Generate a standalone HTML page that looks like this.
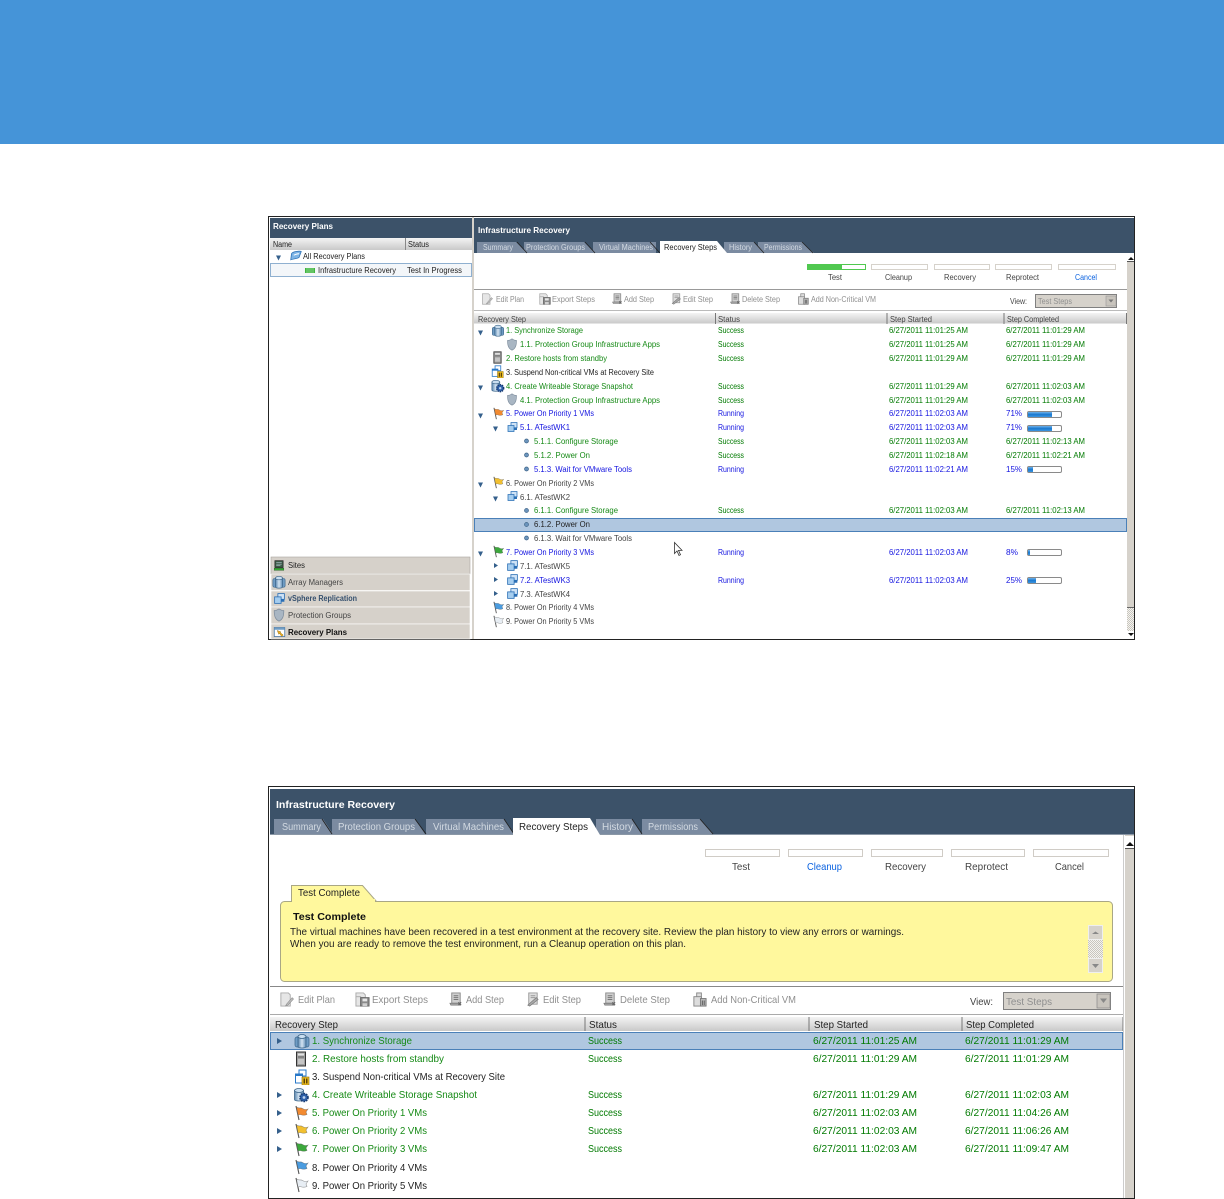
<!DOCTYPE html>
<html><head><meta charset="utf-8"><title>Recovery Plans</title>
<style>
html,body{margin:0;padding:0;background:#fff}
svg{display:block}
text{font-family:"Liberation Sans",sans-serif;white-space:pre}
.t{filter:blur(.3px)}
.u{filter:blur(.25px)}
.t text{font-size:8px}
.u text{font-size:10.5px}
.g{fill:#168a16}.d{fill:#007a00}.b{fill:#1414e0}.k{fill:#222}.m{fill:#444}.n{fill:#666}.y{fill:#8f8f8f}.w{fill:#fff;font-weight:bold}.l{fill:#d3dae2}.c{fill:#0a62e0}.h{fill:#111;font-weight:bold}
</style></head><body>
<svg xmlns="http://www.w3.org/2000/svg" width="1224" height="1199" viewBox="0 0 1224 1199">
<defs>
<linearGradient id="hd" x1="0" y1="0" x2="0" y2="1"><stop offset="0" stop-color="#f4f4f4"/><stop offset="1" stop-color="#c9c9c9"/></linearGradient>
<linearGradient id="pb" x1="0" y1="0" x2="0" y2="1"><stop offset="0" stop-color="#6fb2ea"/><stop offset=".5" stop-color="#1878cf"/><stop offset="1" stop-color="#3d95df"/></linearGradient>
<linearGradient id="cy" x1="0" y1="0" x2="1" y2="0"><stop offset="0" stop-color="#5b88b0"/><stop offset=".5" stop-color="#d4e4f2"/><stop offset="1" stop-color="#5f8cb4"/></linearGradient>
<pattern id="dit" width="2" height="2" patternUnits="userSpaceOnUse"><rect width="2" height="2" fill="#f4f3ef"/><rect width="1" height="1" fill="#c8c5be"/><rect x="1" y="1" width="1" height="1" fill="#c8c5be"/></pattern>
<symbol id="cyl" viewBox="0 0 16 16"><rect x="1" y="4" width="5" height="10" rx="2" fill="#6f9cc4" stroke="#3b6488" stroke-width=".7"/><rect x="10" y="4" width="5" height="10" rx="2" fill="#6f9cc4" stroke="#3b6488" stroke-width=".7"/><path d="M4 3.500v10c0 2 8 2 8 0v-10z" fill="url(#cy)" stroke="#3b6488" stroke-width=".8"/><ellipse cx="8" cy="3.500" rx="4" ry="2" fill="#c9def0" stroke="#3b6488" stroke-width=".8"/></symbol>
<symbol id="cog" viewBox="0 0 16 16"><path d="M1 3.500v9c0 2 9 2 9 0v-9z" fill="url(#cy)" stroke="#3b6488" stroke-width=".8"/><ellipse cx="5.500" cy="3.500" rx="4.500" ry="2" fill="#c9def0" stroke="#3b6488" stroke-width=".8"/><circle cx="10.500" cy="10.500" r="4" fill="#2d5fa8" stroke="#173a70" stroke-width="1.600" stroke-dasharray="1.600 1"/><circle cx="10.500" cy="10.500" r="1.400" fill="#bcd4ef"/></symbol>
<symbol id="srv" viewBox="0 0 16 16"><rect x="3.500" y="1" width="9" height="14" fill="#a0a0a0" stroke="#333" stroke-width="1"/><rect x="5" y="2.500" width="6" height="2" fill="#e2e2e2"/><rect x="5" y="5.500" width="6" height="1" fill="#666"/><rect x="5" y="8" width="6" height="5" fill="#c5c5c5"/></symbol>
<symbol id="sus" viewBox="0 0 16 16"><rect x="5" y="1" width="7" height="6" fill="#fff" stroke="#2878c8"/><rect x="1.500" y="5" width="7" height="9" fill="#fff" stroke="#2878c8"/><rect x="1.500" y="5" width="7" height="2" fill="#2878c8"/><rect x="8" y="8" width="7" height="8" fill="#f0c020" stroke="#8a6a10" stroke-width=".6"/><rect x="9.500" y="9.500" width="1.500" height="5" fill="#5a4208"/><rect x="12" y="9.500" width="1.500" height="5" fill="#5a4208"/></symbol>
<symbol id="vm" viewBox="0 0 16 16"><rect x="6" y="2" width="8" height="7" fill="#cfe3f6" stroke="#2a6fb5"/><rect x="2" y="6" width="8" height="8" fill="#a5cdef" stroke="#2a6fb5"/><rect x="10" y="9" width="4" height="3" fill="#2a6fb5"/></symbol>
<symbol id="shd" viewBox="0 0 16 16"><path d="M2.500 3c3 0 4-1 5.500-2 1.500 1 2.500 2 5.500 2 0 6-1 10-5.500 12C3.500 13 2.500 9 2.500 3z" fill="#a9b6c3" stroke="#7c8b9b" stroke-width=".8"/></symbol>
<symbol id="flg" viewBox="0 0 16 16"><path d="M3 1l3 14" stroke="#555" stroke-width="1.100"/><path d="M3.500 2c3 2 4 0 6 1.500 1.500 1 3 1.500 5.500.5l-2 3 1 2.500c-3 1.500-5 .5-7 0l-2 .5z" fill="currentColor" stroke="#555" stroke-opacity=".6" stroke-width=".6"/></symbol>
<symbol id="pg" viewBox="0 0 16 16"><path d="M2 1h8l2 2v12H2z" fill="#e6e6e6" stroke="#aaa"/><path d="M8 13l6-7 1.500 1.500-6 6.500-2.500.8z" fill="#bdbdbd" stroke="#888" stroke-width=".6"/></symbol>
<symbol id="ex" viewBox="0 0 16 16"><path d="M1 1h8l2 2v3H1z" fill="#e6e6e6" stroke="#aaa"/><rect x="1" y="5" width="5" height="10" fill="#e6e6e6" stroke="#aaa"/><rect x="6" y="6" width="9" height="9" fill="#8a8a8a" stroke="#666"/><rect x="8" y="7" width="5" height="3" fill="#e6e6e6"/><rect x="8" y="12" width="5" height="3" fill="#d0d0d0"/></symbol>
<symbol id="sc" viewBox="0 0 16 16"><path d="M4 1h9v11H4z" fill="#cfcfcf" stroke="#888"/><path d="M2 12h9l2 2H3z" fill="#aaa" stroke="#777" stroke-width=".7"/><path d="M6 4h5M6 6h5M6 8h5" stroke="#777"/><path d="M11 11l3 3M14 11l-3 3" stroke="#666" stroke-width="1.200"/></symbol>
<symbol id="es" viewBox="0 0 16 16"><path d="M4 1h9v12H4z" fill="#dedede" stroke="#999"/><path d="M6 4h5M6 6h5" stroke="#999"/><path d="M3 14l9-8 2 2-9 7z" fill="#aaa" stroke="#777" stroke-width=".7"/></symbol>
<symbol id="av" viewBox="0 0 16 16"><rect x="5" y="1" width="5" height="5" fill="#ddd" stroke="#888"/><rect x="2" y="5" width="8" height="10" fill="#ddd" stroke="#888"/><rect x="9" y="7" width="6" height="8" fill="#bbb" stroke="#777"/><path d="M11 9v5M13 9v5" stroke="#555"/></symbol>
<symbol id="sit" viewBox="0 0 16 16"><rect x="2" y="1" width="12" height="10" fill="#3c5a46" stroke="#222"/><path d="M4 4h8M4 6h8M4 8h6" stroke="#cde" stroke-width=".9"/><rect x="1" y="12" width="14" height="3" fill="#35a835" stroke="#1d5c1d" stroke-width=".6"/></symbol>
<symbol id="rp" viewBox="0 0 16 16"><rect x="1" y="2" width="14" height="12" fill="#fff" stroke="#3f6f9f"/><rect x="1" y="2" width="14" height="3" fill="#6f9cc4"/><path d="M5 6l5 2-1 1 4 3-2 2-3-4-1 1z" fill="#f0b020" stroke="#8a6410" stroke-width=".6"/></symbol>
<symbol id="arc" viewBox="0 0 16 16"><path d="M2 5C3 2 13 1 15 2l-3 8c-3 2-9 2-11 3z" fill="#7db4e6" stroke="#2a6fb5"/><path d="M5 7c2-1 5-2 7-2" stroke="#fff" stroke-width="1.200" fill="none"/></symbol>
</defs>

<rect x="0" y="0" width="1224" height="144" fill="#4594d8"/>

<!-- TOP SCREENSHOT -->
<g class="t">
<rect x="268.500" y="216.500" width="866" height="423" fill="#fff" stroke="#222"/>
<rect x="270" y="218" width="202" height="20" fill="#3c5269"/>
<rect x="472" y="217" width="2" height="422" fill="#d6d2cb"/>
<rect x="474" y="218" width="660" height="35" fill="#3c5269"/>
<rect x="270" y="238" width="202" height="12" fill="url(#hd)"/>
<rect x="405" y="238" width="1" height="12" fill="#888"/>
<text x="273" y="229" class="w" textLength="60" lengthAdjust="spacingAndGlyphs">Recovery Plans</text>
<text x="273" y="247" class="k" textLength="19" lengthAdjust="spacingAndGlyphs">Name</text>
<text x="408" y="247" class="k" textLength="21" lengthAdjust="spacingAndGlyphs">Status</text>
<path d="M276 255.500h5l-2.500 5z" fill="#35608c"/>
<use href="#arc" x="290" y="250" width="12" height="12"/>
<text x="303" y="259" class="k" textLength="62" lengthAdjust="spacingAndGlyphs">All Recovery Plans</text>
<rect x="270.500" y="263.500" width="201" height="13" fill="#f3f6f9" stroke="#8fb0d0"/>
<rect x="305" y="268" width="10" height="5" fill="#3db53d"/><path d="M307 268v5M309 268v5M311 268v5M313 268v5" stroke="#c0e8c0" stroke-width=".6"/>
<text x="318" y="273" class="k" textLength="78" lengthAdjust="spacingAndGlyphs">Infrastructure Recovery</text>
<text x="407" y="273" class="k" textLength="55" lengthAdjust="spacingAndGlyphs">Test In Progress</text>

<rect x="271" y="557" width="199" height="17" fill="#d6d1ca" stroke="#aaa5a0" stroke-width=".6"/>
<rect x="271" y="574" width="199" height="16.500" fill="#d6d1ca" stroke="#fff" stroke-width=".6"/>
<rect x="271" y="591" width="199" height="16" fill="#d6d1ca" stroke="#fff" stroke-width=".6"/>
<rect x="271" y="607" width="199" height="17" fill="#d6d1ca" stroke="#fff" stroke-width=".6"/>
<rect x="271" y="624" width="199" height="15" fill="#d6d1ca" stroke="#fff" stroke-width=".6"/>
<use href="#sit" x="273" y="560" width="12" height="11"/>
<use href="#cyl" x="272" y="575" width="14" height="14"/>
<use href="#vm" x="273" y="592" width="13" height="13"/>
<use href="#shd" x="272" y="608" width="14" height="14"/>
<use href="#rp" x="273" y="626" width="13" height="12"/>
<text x="288" y="568" class="k" textLength="17" lengthAdjust="spacingAndGlyphs">Sites</text>
<text x="288" y="585" class="m" textLength="55" lengthAdjust="spacingAndGlyphs">Array Managers</text>
<text x="288" y="601" style="fill:#35506e;font-weight:bold" textLength="69" lengthAdjust="spacingAndGlyphs">vSphere Replication</text>
<text x="288" y="618" class="m" textLength="63" lengthAdjust="spacingAndGlyphs">Protection Groups</text>
<text x="288" y="635" class="h" textLength="59" lengthAdjust="spacingAndGlyphs">Recovery Plans</text>

<text x="478" y="233" class="w" textLength="92" lengthAdjust="spacingAndGlyphs">Infrastructure Recovery</text>
<path d="M477 253v-11h39l6 6 5 5z M524 253v-11h60l6 6 5 5z M593 253v-11h63v11z" fill="#7b8ba1"/>
<path d="M724 253v-11h30l6 6 5 5z M758 253v-11h44l7 7 5 4z" fill="#7b8ba1"/>
<path d="M517 242l10 11M585 242l10 11M650 242l10 11M754 242l10 11M802 242l11 11" stroke="#222" stroke-width=".8"/>
<path d="M660 253v-12h57l10 12z" fill="#fff"/>
<text x="483" y="250" class="l" textLength="30" lengthAdjust="spacingAndGlyphs">Summary</text>
<text x="526" y="250" class="l" textLength="59" lengthAdjust="spacingAndGlyphs">Protection Groups</text>
<text x="599" y="250" class="l" textLength="54" lengthAdjust="spacingAndGlyphs">Virtual Machines</text>
<text x="664" y="250" class="k" textLength="53" lengthAdjust="spacingAndGlyphs">Recovery Steps</text>
<text x="729" y="250" class="l" textLength="23" lengthAdjust="spacingAndGlyphs">History</text>
<text x="764" y="250" class="l" textLength="38" lengthAdjust="spacingAndGlyphs">Permissions</text>

<g fill="#fff" stroke="#d6d2cb"><rect x="807.500" y="264.500" width="58" height="5" stroke="#50c850"/><rect x="871.500" y="264.500" width="56" height="5"/><rect x="934.500" y="264.500" width="55" height="5"/><rect x="995.500" y="264.500" width="56" height="5"/><rect x="1058.500" y="264.500" width="57" height="5"/></g>
<rect x="807" y="264" width="35" height="6" fill="#50c850"/>
<text x="828" y="280" class="m" textLength="14" lengthAdjust="spacingAndGlyphs">Test</text>
<text x="885" y="280" class="m" textLength="27" lengthAdjust="spacingAndGlyphs">Cleanup</text>
<text x="944" y="280" class="m" textLength="32" lengthAdjust="spacingAndGlyphs">Recovery</text>
<text x="1006" y="280" class="m" textLength="33" lengthAdjust="spacingAndGlyphs">Reprotect</text>
<text x="1075" y="280" class="c" textLength="22" lengthAdjust="spacingAndGlyphs">Cancel</text>
<rect x="474" y="289" width="653" height="1" fill="#999"/>
<use href="#pg" x="481" y="293" width="12" height="12"/><use href="#ex" x="539" y="293" width="12" height="12"/><use href="#sc" x="611" y="293" width="12" height="12"/><use href="#es" x="670" y="293" width="12" height="12"/><use href="#sc" x="729" y="293" width="12" height="12"/><use href="#av" x="797" y="293" width="12" height="12"/>
<text x="496" y="302" class="y" textLength="28" lengthAdjust="spacingAndGlyphs">Edit Plan</text>
<text x="552" y="302" class="y" textLength="43" lengthAdjust="spacingAndGlyphs">Export Steps</text>
<text x="624" y="302" class="y" textLength="30" lengthAdjust="spacingAndGlyphs">Add Step</text>
<text x="683" y="302" class="y" textLength="30" lengthAdjust="spacingAndGlyphs">Edit Step</text>
<text x="742" y="302" class="y" textLength="38" lengthAdjust="spacingAndGlyphs">Delete Step</text>
<text x="811" y="302" class="y" textLength="65" lengthAdjust="spacingAndGlyphs">Add Non-Critical VM</text>
<text x="1010" y="304" class="m" textLength="17" lengthAdjust="spacingAndGlyphs">View:</text>
<rect x="1035.500" y="294.500" width="81" height="13" fill="#d6d2cb" stroke="#808080"/>
<text x="1038" y="304" class="y" textLength="34" lengthAdjust="spacingAndGlyphs">Test Steps</text>
<rect x="1106" y="296" width="10" height="10" fill="#c8c4bd" stroke="#999" stroke-width=".6"/><path d="M1108.500 299.500h5l-2.500 3z" fill="#777"/>
<rect x="474" y="310" width="653" height="1" fill="#bbb"/>
<rect x="474" y="313" width="652" height="10.500" fill="url(#hd)"/>
<path d="M715.500 313v11M887 313v11M1004 313v11M1126.500 313v11" stroke="#777" fill="none"/>
<text x="478" y="322" class="m" textLength="48" lengthAdjust="spacingAndGlyphs">Recovery Step</text>
<text x="718" y="322" class="m" textLength="22" lengthAdjust="spacingAndGlyphs">Status</text>
<text x="890" y="322" class="m" textLength="42" lengthAdjust="spacingAndGlyphs">Step Started</text>
<text x="1007" y="322" class="m" textLength="52" lengthAdjust="spacingAndGlyphs">Step Completed</text>

<rect x="474.500" y="518.500" width="652" height="13" fill="#b0c7e0" stroke="#4a80b8"/>

<path d="M478 330.500h5l-2.500 5zM478 385.500h5l-2.500 5zM478 413.500h5l-2.500 5zM493 426.500h5l-2.500 5zM478 482.500h5l-2.500 5zM493 496.500h5l-2.500 5zM478 551.500h5l-2.500 5z" fill="#35608c"/>
<path d="M494 563v5l4-2.500zM494 577v5l4-2.500zM494 591v5l4-2.500z" fill="#35608c"/>

<use href="#cyl" x="491" y="324" width="14" height="13"/><use href="#shd" x="505" y="338" width="14" height="13"/>
<use href="#srv" x="491" y="351" width="13" height="13"/><use href="#sus" x="491" y="365" width="13" height="13"/>
<use href="#cog" x="491" y="379" width="14" height="14"/><use href="#shd" x="505" y="393" width="14" height="13"/>
<use href="#flg" x="491" y="407" width="14" height="13" style="color:#f28a30"/><use href="#vm" x="506" y="421" width="13" height="12"/>
<use href="#flg" x="491" y="476" width="14" height="13" style="color:#f2c030"/><use href="#vm" x="506" y="490" width="13" height="12"/>
<use href="#flg" x="491" y="545" width="14" height="13" style="color:#3ca83c"/>
<use href="#vm" x="506" y="559" width="13" height="13"/><use href="#vm" x="506" y="573" width="13" height="13"/><use href="#vm" x="506" y="587" width="13" height="13"/>
<use href="#flg" x="491" y="601" width="14" height="13" style="color:#4a9ce0"/><use href="#flg" x="491" y="615" width="14" height="13" style="color:#e8eef4"/>
<g fill="#6b94bc" stroke="#3f6488" stroke-width=".7"><circle cx="526.500" cy="441" r="2"/><circle cx="526.500" cy="455" r="2"/><circle cx="526.500" cy="469" r="2"/><circle cx="526.500" cy="510.500" r="2"/><circle cx="526.500" cy="524.500" r="2"/><circle cx="526.500" cy="538" r="2"/></g>

<text x="506" y="333" class="g" textLength="77" lengthAdjust="spacingAndGlyphs">1. Synchronize Storage</text>
<text x="520" y="347" class="g" textLength="140" lengthAdjust="spacingAndGlyphs">1.1. Protection Group Infrastructure Apps</text>
<text x="506" y="361" class="g" textLength="101" lengthAdjust="spacingAndGlyphs">2. Restore hosts from standby</text>
<text x="506" y="375" class="k" textLength="148" lengthAdjust="spacingAndGlyphs">3. Suspend Non-critical VMs at Recovery Site</text>
<text x="506" y="389" class="g" textLength="127" lengthAdjust="spacingAndGlyphs">4. Create Writeable Storage Snapshot</text>
<text x="520" y="403" class="g" textLength="140" lengthAdjust="spacingAndGlyphs">4.1. Protection Group Infrastructure Apps</text>
<text x="506" y="416" class="b" textLength="88" lengthAdjust="spacingAndGlyphs">5. Power On Priority 1 VMs</text>
<text x="520" y="430" class="b" textLength="50" lengthAdjust="spacingAndGlyphs">5.1. ATestWK1</text>
<text x="534" y="444" class="g" textLength="84" lengthAdjust="spacingAndGlyphs">5.1.1. Configure Storage</text>
<text x="534" y="458" class="g" textLength="56" lengthAdjust="spacingAndGlyphs">5.1.2. Power On</text>
<text x="534" y="472" class="b" textLength="98" lengthAdjust="spacingAndGlyphs">5.1.3. Wait for VMware Tools</text>
<text x="506" y="486" class="m" textLength="88" lengthAdjust="spacingAndGlyphs">6. Power On Priority 2 VMs</text>
<text x="520" y="500" class="m" textLength="50" lengthAdjust="spacingAndGlyphs">6.1. ATestWK2</text>
<text x="534" y="513" class="g" textLength="84" lengthAdjust="spacingAndGlyphs">6.1.1. Configure Storage</text>
<text x="534" y="527" class="k" textLength="56" lengthAdjust="spacingAndGlyphs">6.1.2. Power On</text>
<text x="534" y="541" class="m" textLength="98" lengthAdjust="spacingAndGlyphs">6.1.3. Wait for VMware Tools</text>
<text x="506" y="555" class="b" textLength="88" lengthAdjust="spacingAndGlyphs">7. Power On Priority 3 VMs</text>
<text x="520" y="569" class="m" textLength="50" lengthAdjust="spacingAndGlyphs">7.1. ATestWK5</text>
<text x="520" y="583" class="b" textLength="50" lengthAdjust="spacingAndGlyphs">7.2. ATestWK3</text>
<text x="520" y="597" class="m" textLength="50" lengthAdjust="spacingAndGlyphs">7.3. ATestWK4</text>
<text x="506" y="610" class="m" textLength="88" lengthAdjust="spacingAndGlyphs">8. Power On Priority 4 VMs</text>
<text x="506" y="624" class="m" textLength="88" lengthAdjust="spacingAndGlyphs">9. Power On Priority 5 VMs</text>

<g class="d">
<text x="718" y="333" textLength="26" lengthAdjust="spacingAndGlyphs">Success</text><text x="718" y="347" textLength="26" lengthAdjust="spacingAndGlyphs">Success</text><text x="718" y="361" textLength="26" lengthAdjust="spacingAndGlyphs">Success</text><text x="718" y="389" textLength="26" lengthAdjust="spacingAndGlyphs">Success</text><text x="718" y="403" textLength="26" lengthAdjust="spacingAndGlyphs">Success</text><text x="718" y="444" textLength="26" lengthAdjust="spacingAndGlyphs">Success</text><text x="718" y="458" textLength="26" lengthAdjust="spacingAndGlyphs">Success</text><text x="718" y="513" textLength="26" lengthAdjust="spacingAndGlyphs">Success</text>
<text x="889" y="333" textLength="79" lengthAdjust="spacingAndGlyphs">6/27/2011 11:01:25 AM</text><text x="1006" y="333" textLength="79" lengthAdjust="spacingAndGlyphs">6/27/2011 11:01:29 AM</text>
<text x="889" y="347" textLength="79" lengthAdjust="spacingAndGlyphs">6/27/2011 11:01:25 AM</text><text x="1006" y="347" textLength="79" lengthAdjust="spacingAndGlyphs">6/27/2011 11:01:29 AM</text>
<text x="889" y="361" textLength="79" lengthAdjust="spacingAndGlyphs">6/27/2011 11:01:29 AM</text><text x="1006" y="361" textLength="79" lengthAdjust="spacingAndGlyphs">6/27/2011 11:01:29 AM</text>
<text x="889" y="389" textLength="79" lengthAdjust="spacingAndGlyphs">6/27/2011 11:01:29 AM</text><text x="1006" y="389" textLength="79" lengthAdjust="spacingAndGlyphs">6/27/2011 11:02:03 AM</text>
<text x="889" y="403" textLength="79" lengthAdjust="spacingAndGlyphs">6/27/2011 11:01:29 AM</text><text x="1006" y="403" textLength="79" lengthAdjust="spacingAndGlyphs">6/27/2011 11:02:03 AM</text>
<text x="889" y="444" textLength="79" lengthAdjust="spacingAndGlyphs">6/27/2011 11:02:03 AM</text><text x="1006" y="444" textLength="79" lengthAdjust="spacingAndGlyphs">6/27/2011 11:02:13 AM</text>
<text x="889" y="458" textLength="79" lengthAdjust="spacingAndGlyphs">6/27/2011 11:02:18 AM</text><text x="1006" y="458" textLength="79" lengthAdjust="spacingAndGlyphs">6/27/2011 11:02:21 AM</text>
<text x="889" y="513" textLength="79" lengthAdjust="spacingAndGlyphs">6/27/2011 11:02:03 AM</text><text x="1006" y="513" textLength="79" lengthAdjust="spacingAndGlyphs">6/27/2011 11:02:13 AM</text>
</g>
<g class="b">
<text x="718" y="416" textLength="26" lengthAdjust="spacingAndGlyphs">Running</text><text x="718" y="430" textLength="26" lengthAdjust="spacingAndGlyphs">Running</text><text x="718" y="472" textLength="26" lengthAdjust="spacingAndGlyphs">Running</text><text x="718" y="555" textLength="26" lengthAdjust="spacingAndGlyphs">Running</text><text x="718" y="583" textLength="26" lengthAdjust="spacingAndGlyphs">Running</text>
<text x="889" y="416" textLength="79" lengthAdjust="spacingAndGlyphs">6/27/2011 11:02:03 AM</text><text x="889" y="430" textLength="79" lengthAdjust="spacingAndGlyphs">6/27/2011 11:02:03 AM</text><text x="889" y="472" textLength="79" lengthAdjust="spacingAndGlyphs">6/27/2011 11:02:21 AM</text><text x="889" y="555" textLength="79" lengthAdjust="spacingAndGlyphs">6/27/2011 11:02:03 AM</text><text x="889" y="583" textLength="79" lengthAdjust="spacingAndGlyphs">6/27/2011 11:02:03 AM</text>
<text x="1006" y="416" textLength="16" lengthAdjust="spacingAndGlyphs">71%</text><text x="1006" y="430" textLength="16" lengthAdjust="spacingAndGlyphs">71%</text><text x="1006" y="472" textLength="16" lengthAdjust="spacingAndGlyphs">15%</text><text x="1006" y="555" textLength="12" lengthAdjust="spacingAndGlyphs">8%</text><text x="1006" y="583" textLength="16" lengthAdjust="spacingAndGlyphs">25%</text>
</g>
<g fill="#fff" stroke="#8a8a8a"><rect x="1027.500" y="411.500" width="34" height="6" rx="1.500"/><rect x="1027.500" y="425.500" width="34" height="6" rx="1.500"/><rect x="1027.500" y="466.500" width="34" height="6" rx="1.500"/><rect x="1027.500" y="549.500" width="34" height="6" rx="1.500"/><rect x="1027.500" y="577.500" width="34" height="6" rx="1.500"/></g>
<rect x="1028" y="412" width="24" height="5" fill="url(#pb)"/><rect x="1028" y="426" width="24" height="5" fill="url(#pb)"/><rect x="1028" y="467" width="5" height="5" fill="url(#pb)"/><rect x="1028" y="550" width="2" height="5" fill="url(#pb)"/><rect x="1028" y="578" width="8" height="5" fill="url(#pb)"/>
<path d="M674.500 542.500v11l2.500-2.500 2 4.500 1.500-.8-2-4.300h3.500z" fill="#fff" stroke="#333" stroke-width=".8"/>
<rect x="1127" y="253" width="7" height="386" fill="#d6d2cb"/>
<rect x="1127" y="253" width="7" height="8" fill="#fff"/><path d="M1128 260h6l-3-3z" fill="#111"/>
<rect x="1127" y="261" width="7" height="1" fill="#555"/>
<rect x="1127" y="607" width="7" height="1" fill="#666"/>
<rect x="1127" y="608" width="7" height="23" fill="url(#dit)"/>
<rect x="1127" y="631" width="7" height="8" fill="#fff"/><path d="M1128 633h6l-3 3z" fill="#111"/>
</g>

<!-- BOTTOM SCREENSHOT -->
<g class="u">
<rect x="268.500" y="786.500" width="866" height="412" fill="#fff" stroke="#222"/>
<rect x="270" y="789" width="864" height="45" fill="#3c5269"/>
<rect x="270" y="834" width="864" height="1" fill="#8a97a6"/>
<text x="276" y="808" class="w" textLength="119" lengthAdjust="spacingAndGlyphs">Infrastructure Recovery</text>
<path d="M274 834v-15h49l10 15zM332 834v-15h83l10 15zM426 834v-15h78l10 15zM596 834v-15h36l10 15zM642 834v-15h58l13 15z" fill="#7b8ba1"/>
<path d="M322 819l10 15M415 819l11 15M504 819l10 15M632 819l10 15M700 819l13 15" stroke="#222" stroke-width=".9" fill="none"/>
<path d="M513 835v-17h77l10 17z" fill="#fff"/>
<text x="282" y="830" class="l" textLength="39" lengthAdjust="spacingAndGlyphs">Summary</text>
<text x="338" y="830" class="l" textLength="77" lengthAdjust="spacingAndGlyphs">Protection Groups</text>
<text x="433" y="830" class="l" textLength="71" lengthAdjust="spacingAndGlyphs">Virtual Machines</text>
<text x="519" y="830" class="k" textLength="69" lengthAdjust="spacingAndGlyphs">Recovery Steps</text>
<text x="602" y="830" class="l" textLength="31" lengthAdjust="spacingAndGlyphs">History</text>
<text x="648" y="830" class="l" textLength="50" lengthAdjust="spacingAndGlyphs">Permissions</text>

<g fill="#fff" stroke="#d0ccc6"><rect x="705.500" y="849.500" width="74" height="7"/><rect x="788.500" y="849.500" width="74" height="7"/><rect x="871.500" y="849.500" width="71" height="7"/><rect x="951.500" y="849.500" width="73" height="7"/><rect x="1033.500" y="849.500" width="75" height="7"/></g>
<text x="732" y="870" class="m" textLength="18" lengthAdjust="spacingAndGlyphs">Test</text>
<text x="807" y="870" class="c" textLength="35" lengthAdjust="spacingAndGlyphs">Cleanup</text>
<text x="885" y="870" class="m" textLength="41" lengthAdjust="spacingAndGlyphs">Recovery</text>
<text x="965" y="870" class="m" textLength="43" lengthAdjust="spacingAndGlyphs">Reprotect</text>
<text x="1055" y="870" class="m" textLength="29" lengthAdjust="spacingAndGlyphs">Cancel</text>

<path d="M291.500 901.500v-16h71l14 16" fill="#fff89d" stroke="#a9a785"/>
<rect x="280.500" y="901.500" width="832" height="80" rx="4" fill="#fff89d" stroke="#a9a785"/>
<rect x="292" y="899" width="83" height="4" fill="#fff89d"/>
<text x="298" y="896" class="k" textLength="62" lengthAdjust="spacingAndGlyphs">Test Complete</text>
<text x="293" y="920" class="h" textLength="73" lengthAdjust="spacingAndGlyphs">Test Complete</text>
<text x="290" y="935" class="k" textLength="614" lengthAdjust="spacingAndGlyphs">The virtual machines have been recovered in a test environment at the recovery site. Review the plan history to view any errors or warnings.</text>
<text x="290" y="947" class="k" textLength="396" lengthAdjust="spacingAndGlyphs">When you are ready to remove the test environment, run a Cleanup operation on this plan.</text>
<rect x="1088" y="925" width="15" height="48" fill="url(#dit)"/>
<rect x="1088.500" y="925.500" width="14" height="14" fill="#d6d2cb" stroke="#efefef"/><path d="M1092 934h7l-3.500-2.500z" fill="#888"/>
<rect x="1088.500" y="958.500" width="14" height="14" fill="#d6d2cb" stroke="#efefef"/><path d="M1092 964h7l-3.500 4z" fill="#888"/>
<rect x="270" y="986" width="853" height="1" fill="#888"/>

<use href="#pg" x="279" y="992" width="15" height="15"/><use href="#ex" x="355" y="992" width="15" height="15"/><use href="#sc" x="448" y="992" width="15" height="15"/><use href="#es" x="525" y="992" width="15" height="15"/><use href="#sc" x="602" y="992" width="15" height="15"/><use href="#av" x="692" y="992" width="15" height="15"/>
<text x="298" y="1003" class="y" textLength="37" lengthAdjust="spacingAndGlyphs">Edit Plan</text>
<text x="372" y="1003" class="y" textLength="56" lengthAdjust="spacingAndGlyphs">Export Steps</text>
<text x="466" y="1003" class="y" textLength="38" lengthAdjust="spacingAndGlyphs">Add Step</text>
<text x="543" y="1003" class="y" textLength="38" lengthAdjust="spacingAndGlyphs">Edit Step</text>
<text x="620" y="1003" class="y" textLength="50" lengthAdjust="spacingAndGlyphs">Delete Step</text>
<text x="711" y="1003" class="y" textLength="85" lengthAdjust="spacingAndGlyphs">Add Non-Critical VM</text>
<text x="970" y="1005" class="m" textLength="23" lengthAdjust="spacingAndGlyphs">View:</text>
<rect x="1003.500" y="992.500" width="107" height="17" fill="#d6d2cb" stroke="#808080"/>
<text x="1006" y="1005" class="y" textLength="46" lengthAdjust="spacingAndGlyphs">Test Steps</text>
<rect x="1097" y="994" width="13" height="14" fill="#c8c4bd" stroke="#888" stroke-width=".7"/><path d="M1100 998.500h7l-3.500 4.500z" fill="#888"/>
<rect x="270" y="1014" width="853" height="1" fill="#aaa"/>
<rect x="270" y="1017" width="853" height="14" fill="url(#hd)"/>
<path d="M585 1017v14M809 1017v14M962 1017v14M1123 1017v14" stroke="#777" fill="none"/>
<text x="275" y="1028" class="k" textLength="63" lengthAdjust="spacingAndGlyphs">Recovery Step</text>
<text x="589" y="1028" class="k" textLength="28" lengthAdjust="spacingAndGlyphs">Status</text>
<text x="814" y="1028" class="k" textLength="54" lengthAdjust="spacingAndGlyphs">Step Started</text>
<text x="966" y="1028" class="k" textLength="68" lengthAdjust="spacingAndGlyphs">Step Completed</text>
<rect x="270.500" y="1032.500" width="852" height="17" fill="#b0c7e0" stroke="#4a80b8"/>

<path d="M277 1038v6l5-3zM277 1092v6l5-3zM277 1110v6l5-3zM277 1128v6l5-3zM277 1146v6l5-3z" fill="#35608c"/>
<use href="#cyl" x="294" y="1033" width="16" height="16"/><use href="#srv" x="293" y="1051" width="16" height="16"/><use href="#sus" x="294" y="1069" width="16" height="16"/><use href="#cog" x="293" y="1087" width="17" height="16"/>
<use href="#flg" x="293" y="1105" width="16" height="16" style="color:#f28a30"/><use href="#flg" x="293" y="1123" width="16" height="16" style="color:#f2c030"/><use href="#flg" x="293" y="1141" width="16" height="16" style="color:#3ca83c"/><use href="#flg" x="293" y="1159" width="16" height="16" style="color:#4a9ce0"/><use href="#flg" x="293" y="1177" width="16" height="16" style="color:#e8eef4"/>

<text x="312" y="1044" class="g" textLength="100" lengthAdjust="spacingAndGlyphs">1. Synchronize Storage</text>
<text x="312" y="1062" class="g" textLength="132" lengthAdjust="spacingAndGlyphs">2. Restore hosts from standby</text>
<text x="312" y="1080" class="k" textLength="193" lengthAdjust="spacingAndGlyphs">3. Suspend Non-critical VMs at Recovery Site</text>
<text x="312" y="1098" class="g" textLength="165" lengthAdjust="spacingAndGlyphs">4. Create Writeable Storage Snapshot</text>
<text x="312" y="1116" class="g" textLength="115" lengthAdjust="spacingAndGlyphs">5. Power On Priority 1 VMs</text>
<text x="312" y="1134" class="g" textLength="115" lengthAdjust="spacingAndGlyphs">6. Power On Priority 2 VMs</text>
<text x="312" y="1152" class="g" textLength="115" lengthAdjust="spacingAndGlyphs">7. Power On Priority 3 VMs</text>
<text x="312" y="1171" class="k" textLength="115" lengthAdjust="spacingAndGlyphs">8. Power On Priority 4 VMs</text>
<text x="312" y="1189" class="k" textLength="115" lengthAdjust="spacingAndGlyphs">9. Power On Priority 5 VMs</text>
<g class="d">
<text x="588" y="1044" textLength="34" lengthAdjust="spacingAndGlyphs">Success</text><text x="588" y="1062" textLength="34" lengthAdjust="spacingAndGlyphs">Success</text><text x="588" y="1098" textLength="34" lengthAdjust="spacingAndGlyphs">Success</text><text x="588" y="1116" textLength="34" lengthAdjust="spacingAndGlyphs">Success</text><text x="588" y="1134" textLength="34" lengthAdjust="spacingAndGlyphs">Success</text><text x="588" y="1152" textLength="34" lengthAdjust="spacingAndGlyphs">Success</text>
<text x="813" y="1044" textLength="104" lengthAdjust="spacingAndGlyphs">6/27/2011 11:01:25 AM</text><text x="965" y="1044" textLength="104" lengthAdjust="spacingAndGlyphs">6/27/2011 11:01:29 AM</text>
<text x="813" y="1062" textLength="104" lengthAdjust="spacingAndGlyphs">6/27/2011 11:01:29 AM</text><text x="965" y="1062" textLength="104" lengthAdjust="spacingAndGlyphs">6/27/2011 11:01:29 AM</text>
<text x="813" y="1098" textLength="104" lengthAdjust="spacingAndGlyphs">6/27/2011 11:01:29 AM</text><text x="965" y="1098" textLength="104" lengthAdjust="spacingAndGlyphs">6/27/2011 11:02:03 AM</text>
<text x="813" y="1116" textLength="104" lengthAdjust="spacingAndGlyphs">6/27/2011 11:02:03 AM</text><text x="965" y="1116" textLength="104" lengthAdjust="spacingAndGlyphs">6/27/2011 11:04:26 AM</text>
<text x="813" y="1134" textLength="104" lengthAdjust="spacingAndGlyphs">6/27/2011 11:02:03 AM</text><text x="965" y="1134" textLength="104" lengthAdjust="spacingAndGlyphs">6/27/2011 11:06:26 AM</text>
<text x="813" y="1152" textLength="104" lengthAdjust="spacingAndGlyphs">6/27/2011 11:02:03 AM</text><text x="965" y="1152" textLength="104" lengthAdjust="spacingAndGlyphs">6/27/2011 11:09:47 AM</text>
</g>
<rect x="1123" y="835" width="1" height="363" fill="#ccc"/>
<rect x="1125" y="835" width="9" height="363" fill="#d6d2cb"/>
<rect x="1125" y="836" width="9" height="12" fill="#fff"/><path d="M1126 846h8l-4-4z" fill="#111"/>
<rect x="1125" y="848" width="9" height="1" fill="#555"/>
</g>
</svg>
</body></html>
